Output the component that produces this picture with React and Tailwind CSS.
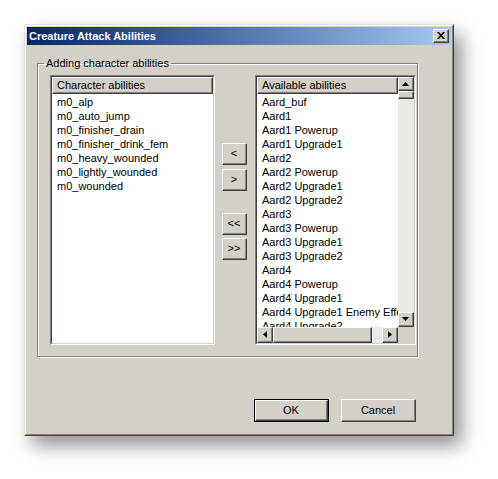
import React from "react";

const CHARACTER = [
  "m0_alp",
  "m0_auto_jump",
  "m0_finisher_drain",
  "m0_finisher_drink_fem",
  "m0_heavy_wounded",
  "m0_lightly_wounded",
  "m0_wounded",
];

const AVAILABLE = [
  "Aard_buf",
  "Aard1",
  "Aard1 Powerup",
  "Aard1 Upgrade1",
  "Aard2",
  "Aard2 Powerup",
  "Aard2 Upgrade1",
  "Aard2 Upgrade2",
  "Aard3",
  "Aard3 Powerup",
  "Aard3 Upgrade1",
  "Aard3 Upgrade2",
  "Aard4",
  "Aard4 Powerup",
  "Aard4 Upgrade1",
  "Aard4 Upgrade1 Enemy Effect",
  "Aard4 Upgrade2",
];

// classic 3d bevel used by buttons, header and scrollbar parts
function Raised({ className = "", children }) {
  return (
    <div className={"border border-t-white border-l-white border-r-[#404040] border-b-[#404040] bg-[#d4d0c8] " + className}>
      <div className="flex h-full w-full items-center justify-center border-r border-b border-[#808080]">{children}</div>
    </div>
  );
}

function Arrow({ dir }) {
  const pts = {
    up: "0,4 3.5,0 7,4",
    down: "0,0 3.5,4 7,0",
    left: "4,0 0,3.5 4,7",
    right: "0,0 4,3.5 0,7",
  }[dir];
  const vert = dir === "up" || dir === "down";
  return (
    <svg width={vert ? 7 : 4} height={vert ? 4 : 7} viewBox={vert ? "0 0 7 4" : "0 0 4 7"}>
      <polygon points={pts} fill="#000" />
    </svg>
  );
}

function Sunken({ className = "", children }) {
  return (
    <div className={"border border-t-[#808080] border-l-[#808080] border-r-white border-b-white " + className}>
      <div className="flex h-full w-full flex-col overflow-hidden border border-t-[#404040] border-l-[#404040] border-r-[#d4d0c8] border-b-[#d4d0c8] bg-white">
        {children}
      </div>
    </div>
  );
}

function Header({ label }) {
  return (
    <Raised className="h-[17px] shrink-0">
      <div className="w-full truncate pl-[4px] leading-[14px]">{label}</div>
    </Raised>
  );
}

function SideButton({ label, className = "" }) {
  return (
    <Raised className={"h-[22px] w-[25px] " + className}>
      <span className="leading-none">{label}</span>
    </Raised>
  );
}

const track = "bg-[#ebe9e4]";

export default function App() {
  return (
    <div className="min-h-screen bg-white pl-[24px] pt-[24px] font-['Liberation_Sans',Arial,sans-serif] text-[11px] text-black">
      <div className="h-[412px] w-[430px] border border-t-[#e4e1da] border-l-[#e4e1da] border-r-[#404040] border-b-[#404040] bg-[#d4d0c8] shadow-[8px_10px_18px_rgba(0,0,0,0.42)]">
        <div className="flex h-full flex-col border border-t-white border-l-white border-r-[#808080] border-b-[#808080] p-px">
          {/* title bar */}
          <div className="flex h-[18px] items-center justify-between bg-gradient-to-r from-[#0a246a] to-[#a6caf0] pl-[2px] pr-[2px]">
            <span className="text-[11px] font-bold leading-none text-white">Creature Attack Abilities</span>
            <Raised className="h-[14px] w-[16px]">
              <svg width="8" height="7" viewBox="0 0 8 7">
                <path d="M0 0h2l2 2.5 2-2.5h2l-3 3.5 3 3.5h-2l-2-2.5-2 2.5h-2l3-3.5z" fill="#000" />
              </svg>
            </Raised>
          </div>

          <fieldset className="ml-[10px] mt-[12px] h-[300px] w-[381px] border border-[#808080] shadow-[inset_1px_1px_0_#fff,1px_1px_0_#fff]">
            <legend className="ml-[6px] px-[2px] leading-[13px]">Adding character abilities</legend>
            <div className="flex pl-[12px] pt-[5px]">
              <Sunken className="h-[270px] w-[165px]">
                <Header label="Character abilities" />
                <div className="pt-px">
                  {CHARACTER.map((it) => (
                    <div key={it} className="h-[14px] whitespace-nowrap pl-[5px] leading-[14px]">{it}</div>
                  ))}
                </div>
              </Sunken>

              <div className="ml-[7px] flex flex-col pt-[68px]">
                <SideButton label="<" />
                <SideButton label=">" className="mt-[4px]" />
                <SideButton label="<<" className="mt-[22px]" />
                <SideButton label=">>" className="mt-[3px]" />
              </div>

              <Sunken className="ml-[8px] h-[270px] w-[161px]">
                <div className="flex min-h-0 flex-1">
                  <div className="flex min-w-0 flex-1 flex-col">
                    <Header label="Available abilities" />
                    <div className="overflow-hidden pt-px">
                      {AVAILABLE.map((it) => (
                        <div key={it} className="h-[14px] whitespace-nowrap pl-[5px] leading-[14px]">{it}</div>
                      ))}
                    </div>
                  </div>
                  <div className={"flex w-[16px] shrink-0 flex-col " + track}>
                    <Raised className="h-[14px] w-[16px]"><Arrow dir="up" /></Raised>
                    <Raised className="h-[8px] w-[16px]" />
                    <div className="flex-1" />
                    <Raised className="h-[15px] w-[16px]"><Arrow dir="down" /></Raised>
                  </div>
                </div>
                <div className="flex h-[16px] shrink-0">
                  <div className={"flex flex-1 " + track}>
                    <Raised className="h-[16px] w-[16px]"><Arrow dir="left" /></Raised>
                    <Raised className="h-[16px] w-[99px]" />
                    <div className="flex-1" />
                    <Raised className="h-[16px] w-[16px]"><Arrow dir="right" /></Raised>
                  </div>
                  <div className="w-[16px] bg-[#d4d0c8]" />
                </div>
              </Sunken>
            </div>
          </fieldset>

          <div className="mt-[42px] flex justify-end gap-[12px] pr-[35px]">
            <div className="h-[23px] w-[75px] border border-black">
              <Raised className="h-full w-full">
                <span className="leading-none">OK</span>
              </Raised>
            </div>
            <Raised className="h-[23px] w-[75px]">
              <span className="leading-none">Cancel</span>
            </Raised>
          </div>
        </div>
      </div>
    </div>
  );
}
